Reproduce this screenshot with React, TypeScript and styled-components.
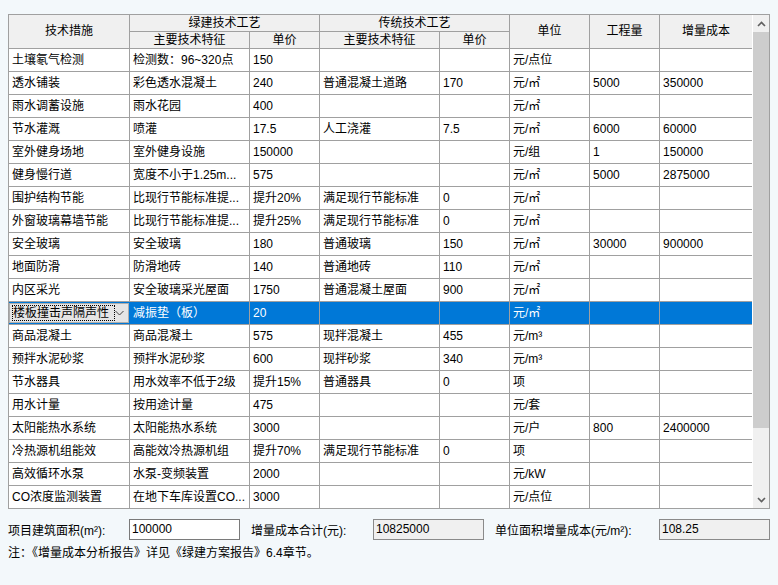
import React from "react";
import styled, { createGlobalStyle } from "styled-components";

const Global = createGlobalStyle`
  html, body { margin: 0; padding: 0; }
  body {
    background: #f3f8fb;
    font-family: "Liberation Sans", "Noto Sans CJK SC", sans-serif;
    font-size: 12px;
    color: #000;
  }
`;

const Page = styled.div`
  width: 778px;
  height: 585px;
  padding: 14px 0 0 8px;
  box-sizing: border-box;
`;

const Grid = styled.div`
  display: flex;
  width: 762px;
  height: 495px;
  border: 1px solid #a0a0a0;
  box-sizing: border-box;
  background: #fff;
  overflow: hidden;
`;

const TableArea = styled.div`
  width: 744px;
  height: 493px;
  overflow: hidden;
`;

const Table = styled.table`
  border-collapse: separate;
  border-spacing: 0;
  table-layout: fixed;
  width: 744px;
`;

const HeadCell = styled.th<{ $h: number }>`
  height: ${(p) => p.$h}px;
  padding: 0;
  box-sizing: border-box;
  background: #f0f0f0;
  border-right: 1px solid #a0a0a0;
  border-bottom: 1px solid #a0a0a0;
  font-weight: normal;
  text-align: center;
  line-height: 15px;
  white-space: nowrap;
  overflow: hidden;
`;

const Row = styled.tr<{ $sel?: boolean }>`
  background: ${(p) => (p.$sel ? "#0078d7" : "#fff")};
  color: ${(p) => (p.$sel ? "#fff" : "#000")};
`;

const Cell = styled.td`
  height: 23px;
  padding: 0 0 0 3px;
  box-sizing: border-box;
  border-right: 1px solid #a0a0a0;
  border-bottom: 1px solid #a0a0a0;
  line-height: 22px;
  white-space: nowrap;
  overflow: hidden;
`;

const ComboCell = styled.td`
  height: 23px;
  padding: 0;
  box-sizing: border-box;
  border-right: 1px solid #0078d7;
  border-bottom: 1px solid #a0a0a0;
  vertical-align: top;
`;

const Combo = styled.div`
  display: flex;
  align-items: center;
  height: 20px;
  margin-top: 1px;
  box-sizing: border-box;
  background: #e5e5e5;
  border: 1px solid #adadad;
  color: #000;
  padding: 0 4px 0 2px;
`;

const ComboText = styled.span`
  flex: 1;
  outline: 1px dotted #000;
  outline-offset: -1px;
  line-height: 16px;
  padding-left: 1px;
  white-space: nowrap;
  overflow: hidden;
`;

const Scrollbar = styled.div`
  width: 16px;
  height: 493px;
  margin-left: 1px;
  background: #f0f0f0;
  display: flex;
  flex-direction: column;
`;

const ScrollButton = styled.div`
  height: 17px;
  display: flex;
  align-items: center;
  justify-content: center;
`;

const Thumb = styled.div`
  height: 396px;
  background: #cdcdcd;
`;

const Track = styled.div`
  flex: 1;
`;

const FormRow = styled.div`
  display: flex;
  align-items: center;
  height: 21px;
  margin-top: 10px;
`;

const Label = styled.span<{ $w: number; $ml?: number }>`
  width: ${(p) => p.$w}px;
  margin-left: ${(p) => p.$ml ?? 0}px;
  white-space: nowrap;
`;

const Field = styled.div<{ $ro?: boolean }>`
  width: 111px;
  height: 21px;
  box-sizing: border-box;
  border: 1px solid ${(p) => (p.$ro ? "#8a8a8a" : "#7a7a7a")};
  background: ${(p) => (p.$ro ? "#f0f0f0" : "#fff")};
  padding-left: 2px;
  line-height: 18px;
`;

const Note = styled.div`
  margin-top: 5px;
  line-height: 16px;
`;

const cols = [121, 120, 70, 120, 70, 80, 70, 93];

type R = string[];
const rows: R[] = [
  ["土壤氡气检测", "检测数：96~320点", "150", "", "", "元/点位", "", ""],
  ["透水铺装", "彩色透水混凝土", "240", "普通混凝土道路", "170", "元/㎡", "5000", "350000"],
  ["雨水调蓄设施", "雨水花园", "400", "", "", "元/㎡", "", ""],
  ["节水灌溉", "喷灌", "17.5", "人工浇灌", "7.5", "元/㎡", "6000", "60000"],
  ["室外健身场地", "室外健身设施", "150000", "", "", "元/组", "1", "150000"],
  ["健身慢行道", "宽度不小于1.25m...", "575", "", "", "元/㎡", "5000", "2875000"],
  ["围护结构节能", "比现行节能标准提...", "提升20%", "满足现行节能标准", "0", "元/㎡", "", ""],
  ["外窗玻璃幕墙节能", "比现行节能标准提...", "提升25%", "满足现行节能标准", "0", "元/㎡", "", ""],
  ["安全玻璃", "安全玻璃", "180", "普通玻璃", "150", "元/㎡", "30000", "900000"],
  ["地面防滑", "防滑地砖", "140", "普通地砖", "110", "元/㎡", "", ""],
  ["内区采光", "安全玻璃采光屋面", "1750", "普通混凝土屋面", "900", "元/㎡", "", ""],
  ["楼板撞击声隔声性", "减振垫（板）", "20", "", "", "元/㎡", "", ""],
  ["商品混凝土", "商品混凝土", "575", "现拌混凝土", "455", "元/m³", "", ""],
  ["预拌水泥砂浆", "预拌水泥砂浆", "600", "现拌砂浆", "340", "元/m³", "", ""],
  ["节水器具", "用水效率不低于2级", "提升15%", "普通器具", "0", "项", "", ""],
  ["用水计量", "按用途计量", "475", "", "", "元/套", "", ""],
  ["太阳能热水系统", "太阳能热水系统", "3000", "", "", "元/户", "800", "2400000"],
  ["冷热源机组能效", "高能效冷热源机组", "提升70%", "满足现行节能标准", "0", "项", "", ""],
  ["高效循环水泵", "水泵-变频装置", "2000", "", "", "元/kW", "", ""],
  ["CO浓度监测装置", "在地下车库设置CO...", "3000", "", "", "元/点位", "", ""],
];

const SEL = 11;

const Chevron = ({ up }: { up?: boolean }) => (
  <svg width="9" height="6" viewBox="0 0 9 6">
    <path
      d={up ? "M1 5 L4.5 1.5 L8 5" : "M1 1 L4.5 4.5 L8 1"}
      fill="none"
      stroke="#606060"
      strokeWidth="1.6"
    />
  </svg>
);

const ComboArrow = () => (
  <svg width="9" height="6" viewBox="0 0 9 6">
    <path d="M0.5 1 L4.5 5 L8.5 1" fill="none" stroke="#404040" strokeWidth="1" />
  </svg>
);

export default function App() {
  return (
    <>
      <Global />
      <Page>
        <Grid>
          <TableArea>
            <Table>
              <colgroup>
                {cols.map((w, i) => (
                  <col key={i} style={{ width: w }} />
                ))}
              </colgroup>
              <thead>
                <tr>
                  <HeadCell $h={34} rowSpan={2}>技术措施</HeadCell>
                  <HeadCell $h={17} colSpan={2}>绿建技术工艺</HeadCell>
                  <HeadCell $h={17} colSpan={2}>传统技术工艺</HeadCell>
                  <HeadCell $h={34} rowSpan={2}>单位</HeadCell>
                  <HeadCell $h={34} rowSpan={2}>工程量</HeadCell>
                  <HeadCell $h={34} rowSpan={2}>增量成本</HeadCell>
                </tr>
                <tr>
                  <HeadCell $h={17}>主要技术特征</HeadCell>
                  <HeadCell $h={17}>单价</HeadCell>
                  <HeadCell $h={17}>主要技术特征</HeadCell>
                  <HeadCell $h={17}>单价</HeadCell>
                </tr>
              </thead>
              <tbody>
                {rows.map((r, i) => (
                  <Row key={i} $sel={i === SEL}>
                    {i === SEL ? (
                      <ComboCell>
                        <Combo>
                          <ComboText>{r[0]}</ComboText>
                          <ComboArrow />
                        </Combo>
                      </ComboCell>
                    ) : (
                      <Cell>{r[0]}</Cell>
                    )}
                    {r.slice(1).map((c, j) => (
                      <Cell key={j}>{c}</Cell>
                    ))}
                  </Row>
                ))}
              </tbody>
            </Table>
          </TableArea>
          <Scrollbar>
            <ScrollButton>
              <Chevron up />
            </ScrollButton>
            <Thumb />
            <Track />
            <ScrollButton>
              <Chevron />
            </ScrollButton>
          </Scrollbar>
        </Grid>
        <FormRow>
          <Label $w={121}>项目建筑面积(m²):</Label>
          <Field>100000</Field>
          <Label $w={122} $ml={11}>增量成本合计(元):</Label>
          <Field $ro>10825000</Field>
          <Label $w={164} $ml={11}>单位面积增量成本(元/m²):</Label>
          <Field $ro>108.25</Field>
        </FormRow>
        <Note>注：《增量成本分析报告》详见《绿建方案报告》6.4章节。</Note>
      </Page>
    </>
  );
}
